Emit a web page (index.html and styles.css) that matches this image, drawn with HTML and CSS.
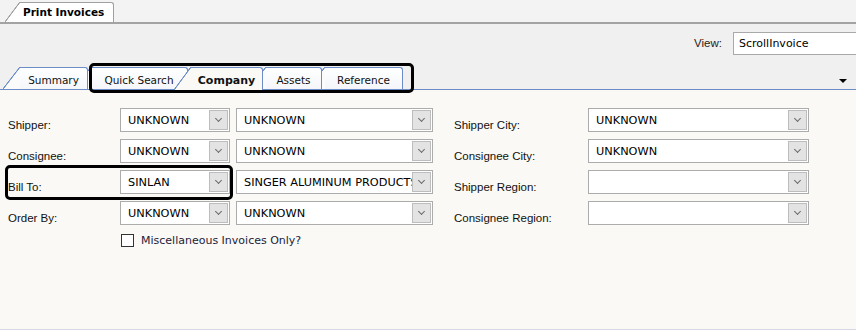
FILE: index.html
```html
<!DOCTYPE html>
<html lang="en">
<head>
  <meta charset="UTF-8" />
  <title>Print Invoices</title>
  <link rel="stylesheet" href="styles.css">
</head>
<body>
  <div class="window">
    <div class="doc-strip">
      <div class="doc-tab">Print Invoices</div>
    </div>

    <div class="toolbar">
      <span class="view-label">View:</span>
      <div class="view-box">ScrollInvoice</div>
    </div>

    <div class="tab-strip">
      <div class="tab tab-summary">Summary</div>
      <div class="tab tab-quick">Quick Search</div>
      <div class="tab tab-company active">Company</div>
      <div class="tab tab-assets">Assets</div>
      <div class="tab tab-reference">Reference</div>
      <span class="strip-arrow"></span>
    </div>

    <div class="panel">
      <div class="fields">
        <div class="grid grid-left">
          <span class="lbl">Shipper:</span>
          <div class="combo"><span class="combo-text">UNKNOWN</span><span class="combo-btn"></span></div>
          <div class="combo"><span class="combo-text">UNKNOWN</span><span class="combo-btn"></span></div>

          <span class="lbl">Consignee:</span>
          <div class="combo"><span class="combo-text">UNKNOWN</span><span class="combo-btn"></span></div>
          <div class="combo"><span class="combo-text">UNKNOWN</span><span class="combo-btn"></span></div>

          <span class="lbl">Bill To:</span>
          <div class="combo"><span class="combo-text">SINLAN</span><span class="combo-btn"></span></div>
          <div class="combo"><span class="combo-text">SINGER ALUMINUM PRODUCTS</span><span class="combo-btn"></span></div>

          <span class="lbl">Order By:</span>
          <div class="combo"><span class="combo-text">UNKNOWN</span><span class="combo-btn"></span></div>
          <div class="combo"><span class="combo-text">UNKNOWN</span><span class="combo-btn"></span></div>

          <label class="check-row">
            <span class="check-box"></span>
            <span>Miscellaneous Invoices Only?</span>
          </label>
        </div>

        <div class="grid grid-right">
          <span class="lbl">Shipper City:</span>
          <div class="combo"><span class="combo-text">UNKNOWN</span><span class="combo-btn"></span></div>

          <span class="lbl">Consignee City:</span>
          <div class="combo"><span class="combo-text">UNKNOWN</span><span class="combo-btn"></span></div>

          <span class="lbl">Shipper Region:</span>
          <div class="combo"><span class="combo-text"></span><span class="combo-btn"></span></div>

          <span class="lbl">Consignee Region:</span>
          <div class="combo"><span class="combo-text"></span><span class="combo-btn"></span></div>
        </div>
      </div>

      <div class="mark mark-billto"></div>
    </div>

    <div class="mark mark-tabs"></div>
  </div>
</body>
</html>
```

FILE: styles.css
```css
* {
  box-sizing: border-box;
}
body {
  margin: 0;
  background: #f0f0f0;
  font-family: "DejaVu Sans", sans-serif;
  color: #000;
}
.window {
  position: relative;
  width: 856px;
  height: 330px;
  overflow: hidden;
  display: flex;
  flex-direction: column;
}

/* document tab on top */
.doc-strip {
  height: 24px;
  display: flex;
  align-items: flex-end;
  padding-left: 20px;
  border-bottom: 2px solid #a3a3a3;
  background: #f3f3f3;
}
.doc-tab {
  position: relative;
  height: 20px;
  padding: 0 9px 1px 3px;
  display: flex;
  align-items: center;
  background: #fff;
  border-top: 1px solid #a0a0a0;
  border-right: 1px solid #a0a0a0;
  border-top-right-radius: 3px;
  font-size: 10.5px;
  font-weight: bold;
}
.doc-tab::before {
  content: "";
  position: absolute;
  top: -1px;
  bottom: 0;
  left: -15px;
  width: 15px;
  background: linear-gradient(to bottom right, transparent calc(50% - 0.8px), #a0a0a0 calc(50% - 0.3px), #a0a0a0 calc(50% + 0.3px), #fff calc(50% + 0.8px));
}

/* view selector */
.toolbar {
  height: 43px;
  display: flex;
  justify-content: flex-end;
  align-items: flex-start;
  padding-top: 8px;
  margin-right: -6px;
}
.view-label {
  font-family: "Liberation Sans", sans-serif;
  font-size: 11.5px;
  line-height: 23px;
  color: #222;
  margin-right: 11px;
}
.view-box {
  width: 129px;
  height: 23px;
  border: 1px solid #a9a9a9;
  background: #fff;
  font-size: 11px;
  line-height: 21px;
  padding-left: 5px;
}

/* page tabs */
.tab-strip {
  height: 23px;
  display: flex;
  align-items: flex-end;
  padding-left: 20px;
  border-bottom: 1px solid #6b8cc7;
}
.tab {
  position: relative;
  height: 22px;
  margin-right: 3px;
  padding-top: 3px;
  display: flex;
  align-items: center;
  justify-content: center;
  background: linear-gradient(#ffffff, #f4f6fa);
  border-top: 1px solid #6b8cc7;
  border-right: 1px solid #6b8cc7;
  border-top-right-radius: 3px;
  font-size: 10.5px;
  color: #111;
}
.tab::before {
  content: "";
  position: absolute;
  top: -1px;
  bottom: 0;
  left: -17px;
  width: 17px;
  background: linear-gradient(to bottom right, transparent calc(50% - 0.8px), #6b8cc7 calc(50% - 0.3px), #6b8cc7 calc(50% + 0.3px), #fbfbfc calc(50% + 0.8px));
}
.tab-summary { width: 68px; z-index: 5; }
.tab-quick { width: 97px; z-index: 4; }
.tab-company { width: 72px; z-index: 3; }
.tab-assets { width: 56px; z-index: 2; }
.tab-reference { width: 78px; z-index: 1; }
.tab.active {
  z-index: 10;
  height: 23px;
  margin-bottom: -1px;
  padding-top: 3px;
  padding-bottom: 1px;
  background: #faf9f5;
  font-weight: bold;
  font-size: 11px;
}
.tab.active::before {
  background: linear-gradient(to bottom right, transparent calc(50% - 0.8px), #6b8cc7 calc(50% - 0.3px), #6b8cc7 calc(50% + 0.3px), #faf9f5 calc(50% + 0.8px));
}
.strip-arrow {
  margin-left: auto;
  margin-right: 9px;
  align-self: center;
  margin-top: 6px;
  border-left: 4px solid transparent;
  border-right: 4px solid transparent;
  border-top: 4px solid #000;
}

/* form panel */
.panel {
  position: relative;
  flex: 1;
  background: #faf9f5;
  border-bottom: 1px solid #d6d6e4;
  padding-top: 18px;
}
.fields {
  display: flex;
  align-items: flex-start;
}
.grid {
  display: grid;
  grid-auto-rows: 24px;
  row-gap: 7px;
  column-gap: 6px;
}
.grid-left {
  grid-template-columns: 106px 110px 197px;
  padding-left: 8px;
}
.grid-right {
  grid-template-columns: 128px 221px;
  margin-left: 21px;
}
.lbl {
  align-self: end;
  font-family: "Liberation Sans", sans-serif;
  font-size: 11.5px;
  line-height: 13px;
  color: #111;
}
.combo {
  display: flex;
  align-items: center;
  border: 1px solid #acacac;
  background: #fff;
  padding: 1px 1px 1px 7px;
  font-size: 11.3px;
  overflow: hidden;
}
.combo-text {
  flex: 1;
  white-space: nowrap;
  overflow: hidden;
}
.combo-btn {
  position: relative;
  flex: none;
  width: 19px;
  height: 20px;
  background: #e3e3e3;
  border: 1px solid #bdbdbd;
}
.combo-btn::after {
  content: "";
  position: absolute;
  left: 6px;
  top: 5px;
  width: 4px;
  height: 4px;
  border-right: 1px solid #6a6a6a;
  border-bottom: 1px solid #6a6a6a;
  transform: rotate(45deg);
}
.check-row {
  grid-column: 2 / 4;
  display: flex;
  align-items: center;
  gap: 7px;
  height: 15px;
  margin-top: 1px;
  margin-left: 1px;
  font-size: 11px;
  color: #1c1c3c;
}
.check-box {
  width: 13px;
  height: 13px;
  border: 1px solid #333;
  background: #fff;
}

/* black highlight marks */
.mark {
  position: absolute;
  border: 3px solid #000;
  border-radius: 5px;
  pointer-events: none;
}
.mark-tabs {
  left: 89px;
  top: 63px;
  width: 325px;
  height: 30px;
  z-index: 20;
}
.mark-billto {
  left: 5px;
  top: 75px;
  width: 228px;
  height: 35px;
}
```
